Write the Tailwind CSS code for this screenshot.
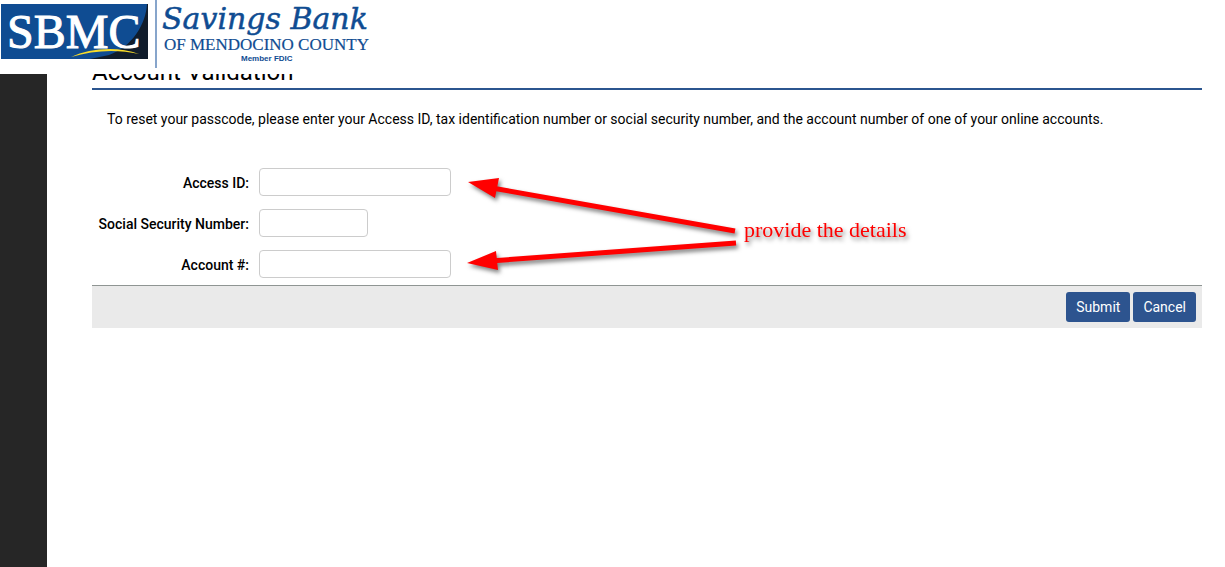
<!DOCTYPE html>
<html lang="en">
<head>
    <meta charset="UTF-8">
    <meta name="viewport" content="width=device-width, initial-scale=1.0">
    <title>Account Validation - Savings Bank of Mendocino County</title>
    <script src="https://cdn.jsdelivr.net/npm/@tailwindcss/browser@4"></script>
</head>
<body class="min-h-screen bg-white font-[Roboto,sans-serif] text-sm text-black">
    <!-- Header -->
    <header class="fixed inset-x-0 top-0 z-10 h-[74px] bg-white">
        <a href="#" aria-label="Savings Bank of Mendocino County" class="block w-[376px]">
            <svg class="block" width="376" height="74" viewBox="0 0 376 74">
                <rect x="1" y="4" width="147" height="55" fill="#0f4c92"/>
                <path d="M147 4C146 24 132 47 109 55L90 59H148V4Z" fill="#101c2b"/>
                <text x="7" y="48" font-family="Liberation Serif, serif" font-size="48" fill="#fff" stroke="#fff" stroke-width="1">SBMC</text>
                <path d="M71 57C90 48 118 46 139 54C117 49 94 50 71 57Z" fill="#f8dc2a"/>
                <path d="M156 0V68" stroke="#87a5cb" stroke-width="2"/>
                <text x="162" y="29" font-family="DejaVu Serif, serif" font-size="30" font-style="italic" fill="#0f4c92" stroke="#0f4c92" stroke-width="0.5">Savings Bank</text>
                <text x="164" y="50" font-family="Liberation Serif, serif" font-size="17" fill="#0f4c92" stroke="#0f4c92" stroke-width="0.2">OF MENDOCINO COUNTY</text>
                <text x="241" y="61" font-family="Liberation Sans, sans-serif" font-size="8" font-weight="700" fill="#0f4c92">Member FDIC</text>
            </svg>
        </a>
    </header>

    <div class="flex min-h-screen">
        <aside class="w-[47px] shrink-0 bg-[#262626]"></aside>

        <main class="relative mr-[23px] ml-[45px] min-w-0 flex-1 pt-16">
            <h1 class="border-b-2 border-[#2b558f] pb-2 text-2xl leading-4">Account Validation</h1>

            <form onsubmit="return false">
                <p class="mt-[19px] px-[15px] leading-5">To reset your passcode, please enter your Access ID, tax identification number or social security number, and the account number of one of your online accounts.</p>

                <div class="mt-[39px] mb-[7px] grid grid-cols-[157px_1fr] items-center gap-x-[10px] gap-y-[13px] font-medium">
                    <label for="accessId" class="pt-0.5 text-right">Access ID:</label>
                    <input type="text" id="accessId" class="h-7 w-48 rounded border border-[#ccc] px-2">
                    <label for="ssn" class="pt-0.5 text-right">Social Security Number:</label>
                    <input type="text" id="ssn" class="h-7 w-[109px] rounded border border-[#ccc] px-2">
                    <label for="account" class="pt-0.5 text-right">Account #:</label>
                    <input type="text" id="account" class="h-7 w-48 rounded border border-[#ccc] px-2">
                </div>

                <div class="flex justify-end gap-[3px] border-t border-[#8f9593] bg-[#eaeaea] px-[6px] py-[6px]">
                    <button type="submit" class="h-[30px] rounded-[3px] bg-[#2d548f] px-[10px] text-white">Submit</button>
                    <button type="button" class="h-[30px] rounded-[3px] bg-[#2d548f] px-[10px] text-white">Cancel</button>
                </div>
            </form>

            <!-- Callout over the form -->
            <div class="pointer-events-none absolute top-[170px] left-[370px]">
                <svg class="drop-shadow-[2px_3px_2px_rgba(0,0,0,0.5)]" width="460" height="110" viewBox="462 170 460 110">
                    <path d="M492 188L735 231M490 261L736 243" stroke="#f00" stroke-width="5" fill="none"/>
                    <path d="M468 182L499 178L495 198ZM467 263L496 251L498 270Z" fill="#f00"/>
                    <text x="744" y="237" font-family="Liberation Serif, serif" font-size="22" fill="#f00">provide the details</text>
                </svg>
            </div>
        </main>
    </div>
</body>
</html>
